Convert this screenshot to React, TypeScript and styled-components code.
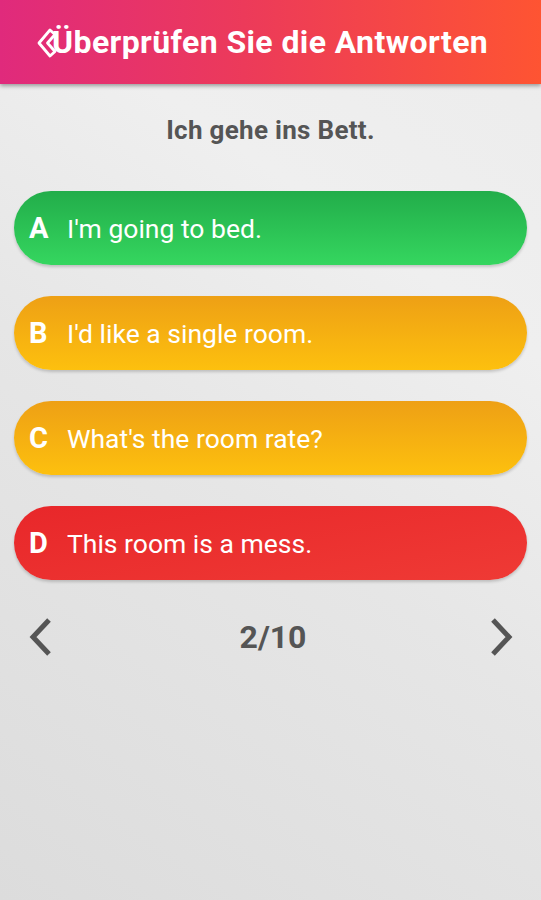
import React from "react";
import styled, { createGlobalStyle } from "styled-components";

const Global = createGlobalStyle`
  html, body { margin: 0; padding: 0; }
  body {
    font-family: Roboto, "Noto Sans", "Liberation Sans", sans-serif;
    width: 541px;
    height: 900px;
    overflow: hidden;
  }
`;

const Page = styled.div`
  width: 541px;
  height: 900px;
  display: flex;
  flex-direction: column;
  background: linear-gradient(35deg, #dcdcdc 0%, #e6e6e6 45%, #efefef 72%, #ececec 100%);
`;

const Header = styled.header`
  height: 84px;
  flex-shrink: 0;
  display: flex;
  align-items: center;
  padding-left: 37px;
  background: linear-gradient(90deg, #e02a7c 0%, #ec3a5a 45%, #fe5432 100%);
  box-shadow: 0 2px 4px rgba(0, 0, 0, 0.35);
  position: relative;
  z-index: 1;
`;

const BackIcon = styled.svg`
  width: 20px;
  height: 30px;
  flex-shrink: 0;
  margin-right: -5px;
  margin-top: 1px;
`;

const Title = styled.h1`
  margin: 0;
  color: #fff;
  font-size: 32px;
  font-weight: 700;
  letter-spacing: 0.4px;
  white-space: nowrap;
`;

const Content = styled.main`
  display: flex;
  flex-direction: column;
  padding: 0 14px;
`;

const Question = styled.div`
  margin-top: 28px;
  text-align: center;
  color: #555;
  font-size: 26px;
  font-weight: 700;
  letter-spacing: 0.3px;
  line-height: 36px;
`;

const Answers = styled.div`
  display: flex;
  flex-direction: column;
  gap: 31px;
  margin-top: 43px;
`;

const tones = {
  green: "linear-gradient(180deg, #22ad4a 0%, #35d65f 100%)",
  orange: "linear-gradient(180deg, #eea015 0%, #fdc00e 100%)",
  red: "linear-gradient(170deg, #e8272a 0%, #ef3a35 100%)",
};

const Answer = styled.div<{ $tone: keyof typeof tones }>`
  height: 74px;
  border-radius: 37px;
  background: ${(p) => tones[p.$tone]};
  box-shadow: 0 2px 3px rgba(0, 0, 0, 0.18);
  display: flex;
  align-items: center;
  padding-left: 15px;
  color: #fff;
`;

const Letter = styled.span`
  width: 38px;
  flex-shrink: 0;
  font-size: 29px;
  font-weight: 700;
`;

const AnswerText = styled.span`
  font-size: 26.5px;
  font-weight: 400;
`;

const Nav = styled.nav`
  display: flex;
  align-items: center;
  justify-content: space-between;
  margin-top: 36px;
  padding: 0 13px 0 14px;
`;

const Chevron = styled.svg`
  width: 26px;
  height: 42px;
`;

const Counter = styled.span`
  color: #555;
  font-size: 32px;
  font-weight: 700;
  margin-left: 4px;
`;

const answers: { l: string; t: string; tone: keyof typeof tones }[] = [
  { l: "A", t: "I'm going to bed.", tone: "green" },
  { l: "B", t: "I'd like a single room.", tone: "orange" },
  { l: "C", t: "What's the room rate?", tone: "orange" },
  { l: "D", t: "This room is a mess.", tone: "red" },
];

export default function App() {
  return (
    <Page>
      <Global />
      <Header>
        <BackIcon viewBox="0 0 20 30">
          <path
            d="M13 2 L2 15 L13 28 L18 23.5 L10.5 15 L18 6.5 Z"
            fill="none"
            stroke="#fff"
            strokeWidth="2.8"
            strokeLinejoin="round"
          />
        </BackIcon>
        <Title>Überprüfen Sie die Antworten</Title>
      </Header>
      <Content>
        <Question>Ich gehe ins Bett.</Question>
        <Answers>
          {answers.map((a) => (
            <Answer key={a.l} $tone={a.tone}>
              <Letter>{a.l}</Letter>
              <AnswerText>{a.t}</AnswerText>
            </Answer>
          ))}
        </Answers>
        <Nav>
          <Chevron viewBox="0 0 26 42">
            <path d="M21 4 L5 21 L21 38" fill="none" stroke="#555" strokeWidth="5" />
          </Chevron>
          <Counter>2/10</Counter>
          <Chevron viewBox="0 0 26 42">
            <path d="M5 4 L21 21 L5 38" fill="none" stroke="#555" strokeWidth="5" />
          </Chevron>
        </Nav>
      </Content>
    </Page>
  );
}
